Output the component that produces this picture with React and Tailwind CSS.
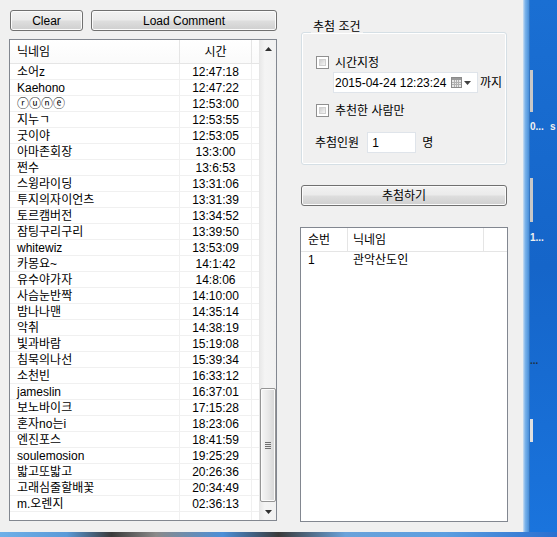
import React from "react";

const rows = [
  ["소어z", "12:47:18"],
  ["Kaehono", "12:47:22"],
  ["ⓡⓤⓝⓔ", "12:53:00"],
  ["지누ㄱ", "12:53:55"],
  ["굿이야", "12:53:05"],
  ["아마존회장", "13:3:00"],
  ["쩐수", "13:6:53"],
  ["스윙라이딩", "13:31:06"],
  ["투지의자이언츠", "13:31:39"],
  ["토르캠버전", "13:34:52"],
  ["잠팅구리구리", "13:39:50"],
  ["whitewiz", "13:53:09"],
  ["카몽요~", "14:1:42"],
  ["유수야가자", "14:8:06"],
  ["사슴눈반짝", "14:10:00"],
  ["밤나나맨", "14:35:14"],
  ["악취", "14:38:19"],
  ["빛과바람", "15:19:08"],
  ["침묵의나선", "15:39:34"],
  ["소천빈", "16:33:12"],
  ["jameslin", "16:37:01"],
  ["보노바이크", "17:15:28"],
  ["혼자no는i", "18:23:06"],
  ["엔진포스", "18:41:59"],
  ["soulemosion", "19:25:29"],
  ["밟고또밟고", "20:26:36"],
  ["고래심줄할배꽃", "20:34:49"],
  ["m.오렌지", "02:36:13"],
];

const btn =
  "flex items-center justify-center h-[21px] rounded-[3px] border border-[#707070] bg-[linear-gradient(#f2f2f2,#ebebeb_45%,#dddddd_55%,#cfcfcf)] shadow-[inset_0_0_0_1px_#fbfbfb] text-[12px] text-black leading-none";

function Checkbox() {
  return (
    <div className="w-[13px] h-[13px] border border-[#8f8f8f] bg-white p-[2px]">
      <div className="w-full h-full border border-[#d0d0d0] bg-[linear-gradient(135deg,#cfcfcf,#f6f6f6)]" />
    </div>
  );
}

export default function App() {
  return (
    <div
      className="w-[557px] h-[537px] flex flex-col overflow-hidden bg-[#f0f0f0] text-black"
      style={{ fontFamily: '"Liberation Sans", "Noto Sans CJK KR", sans-serif' }}
    >
      <div className="flex flex-1 min-h-0">
        {/* main window */}
        <div className="w-[523px] flex pl-[9px] pt-[10px]">
          {/* left column */}
          <div className="w-[268px] flex flex-col">
            <div className="flex gap-[8px] pl-[1px]">
              <div className={btn + " w-[73px]"}>Clear</div>
              <div className={btn + " w-[186px]"}>Load Comment</div>
            </div>
            <div className="mt-[8px] h-[482px] border border-[#828790] bg-white flex text-[12px]">
              <div className="w-[249px] flex flex-col">
                {/* header */}
                <div className="h-[24px] flex border-b border-[#e5e5e5] bg-[linear-gradient(#ffffff,#fafafa)]">
                  <div className="w-[170px] pl-[7px] flex items-center border-r border-[#e5e5e5] leading-none">닉네임</div>
                  <div className="w-[72px] flex items-center justify-center border-r border-[#e5e5e5] leading-none">시간</div>
                  <div className="flex-1" />
                </div>
                {rows.map(([n, t], i) => (
                  <div key={i} className="h-[16px] flex border-b border-[#f0f0f0]">
                    <div className="w-[170px] pl-[7px] flex items-center border-r border-[#f0f0f0] leading-none whitespace-nowrap">{n}</div>
                    <div className="w-[72px] flex items-center justify-center border-r border-[#f0f0f0] leading-none">{t}</div>
                    <div className="flex-1" />
                  </div>
                ))}
                <div className="flex-1 flex">
                  <div className="w-[170px] border-r border-[#f0f0f0]" />
                  <div className="w-[72px] border-r border-[#f0f0f0]" />
                </div>
              </div>
              {/* scrollbar */}
              <div className="w-[17px] flex flex-col bg-[linear-gradient(90deg,#e9e9e9,#f4f4f4_30%,#f1f1f1)] border-l border-[#e6e6e6]">
                <div className="h-[17px] flex items-center justify-center">
                  <svg width="7" height="4" viewBox="0 0 7 4"><path d="M0 4 L3.5 0 L7 4 Z" fill="#303030" /></svg>
                </div>
                <div className="flex-1 flex flex-col justify-end pb-[1px]">
                  <div className="h-[114px] rounded-[2px] border border-[#959595] bg-[linear-gradient(90deg,#f6f6f6,#e8e8e8_50%,#d6d6d6)] shadow-[inset_0_0_0_1px_#fbfbfb] flex flex-col items-center justify-center gap-[1px]">
                    <div className="w-[6px] h-[1px] bg-[#707070]" />
                    <div className="w-[6px] h-[1px] bg-[#707070]" />
                    <div className="w-[6px] h-[1px] bg-[#707070]" />
                    <div className="w-[6px] h-[1px] bg-[#707070]" />
                  </div>
                </div>
                <div className="h-[17px] flex items-center justify-center">
                  <svg width="7" height="4" viewBox="0 0 7 4"><path d="M0 0 L3.5 4 L7 0 Z" fill="#303030" /></svg>
                </div>
              </div>
            </div>
          </div>

          {/* right column */}
          <div className="ml-[23px] w-[208px] flex flex-col text-[12px]">
            {/* group box */}
            <div className="mt-[22px] ml-[1px] w-[206px] h-[133px] rounded-[3px] border border-[#d5dfe5] shadow-[inset_0_0_0_1px_#ffffff] flex flex-col">
              <div className="-mt-[12px] ml-[9px] self-start px-[2px] bg-[#f0f0f0] leading-none text-[12px] h-[12px]">추첨 조건</div>
              <div className="flex flex-col pt-[23px] pl-[14px]">
                <div className="flex items-center gap-[6px] h-[13px]">
                  <Checkbox />
                  <span className="leading-none">시간지정</span>
                </div>
                <div className="flex items-center mt-[3px] ml-[17px]">
                  <div className="w-[145px] h-[21px] border border-[#dfe4ea] bg-white flex items-center pl-[1px] pr-[6px]">
                    <span className="leading-none whitespace-nowrap">2015-04-24 12:23:24</span>
                    <div className="ml-auto flex items-center gap-[2px]">
                      <svg width="11" height="11" viewBox="0 0 11 11">
                        <rect x="0.5" y="0.5" width="10" height="10" fill="#e8e8e8" stroke="#8a8a8a" />
                        <rect x="1" y="1" width="9" height="2" fill="#9a9a9a" />
                        <path d="M1 5.5H10M1 7.5H10M3.5 3V10M5.5 3V10M7.5 3V10" stroke="#b0b0b0" strokeWidth="1" />
                      </svg>
                      <svg width="7" height="4" viewBox="0 0 7 4"><path d="M0 0 L3.5 4 L7 0 Z" fill="#404040" /></svg>
                    </div>
                  </div>
                  <span className="ml-[2px] leading-none">까지</span>
                </div>
                <div className="flex items-center gap-[6px] h-[13px] mt-[11px]">
                  <Checkbox />
                  <span className="leading-none">추천한 사람만</span>
                </div>
                <div className="flex items-center mt-[15px] -ml-[1px]">
                  <span className="leading-none">추첨인원</span>
                  <div className="ml-[8px] w-[49px] h-[21px] border border-[#dfe4ea] bg-white pl-[4px] flex items-center leading-none">1</div>
                  <span className="ml-[6px] leading-none">명</span>
                </div>
              </div>
            </div>
            {/* draw button */}
            <div className={btn + " ml-[1px] mt-[20px] w-[206px] h-[20px] border-[#3c7fb1] shadow-[inset_0_0_0_1px_#c4e4f6]"}>추첨하기</div>
            {/* result list */}
            <div className="mt-[21px] h-[295px] border border-[#828790] bg-white flex flex-col">
              <div className="h-[24px] flex border-b border-[#e5e5e5]">
                <div className="w-[47px] pl-[7px] flex items-center border-r border-[#e5e5e5] leading-none">순번</div>
                <div className="w-[136px] pl-[5px] flex items-center border-r border-[#e5e5e5] leading-none">닉네임</div>
                <div className="flex-1" />
              </div>
              <div className="h-[16px] flex">
                <div className="w-[47px] pl-[7px] flex items-center leading-none">1</div>
                <div className="w-[136px] pl-[5px] flex items-center leading-none">관악산도인</div>
              </div>
            </div>
          </div>
        </div>

        {/* desktop strip */}
        <div className="flex-1 flex">
          <div className="w-[7px] bg-[linear-gradient(90deg,#cfe0f2,#7db4ea_30%,#4e93dc_80%,#2a66b0)]" />
          <div className="flex-1 relative bg-[linear-gradient(#1a6fd3,#1565c9_50%,#1a74dd)]">
            <div className="absolute left-[0px] top-[70px] w-[3px] h-[42px] bg-[#c8c8c8]" />
            <div className="absolute left-[0px] top-[178px] w-[3px] h-[44px] bg-[#c8c8c8]" />
            <div className="absolute left-[0px] top-[419px] w-[3px] h-[23px] bg-[#e0e0e0]" />
            <div className="absolute left-[0px] top-[122px] text-[10px] leading-none text-[#f0f0f0] font-bold">0...</div>
            <div className="absolute left-[20px] top-[122px] text-[10px] leading-none text-[#f0f0f0] font-bold">s</div>
            <div className="absolute left-[0px] top-[233px] text-[10px] leading-none text-[#f0f0f0] font-bold">1...</div>
            <div className="absolute left-[0px] top-[356px] text-[10px] leading-none text-[#203040] font-bold">...</div>
          </div>
        </div>
      </div>
      {/* bottom strip */}
      <div className="h-[5px] bg-[linear-gradient(90deg,#6fb0e8,#5a9ad8_12%,#3a3a3a_20%,#8a8a8a_28%,#4b8fd8_40%,#3a3a3a_50%,#6aa2da_62%,#5c9ee0_80%,#2a6fd0)]" />
    </div>
  );
}
